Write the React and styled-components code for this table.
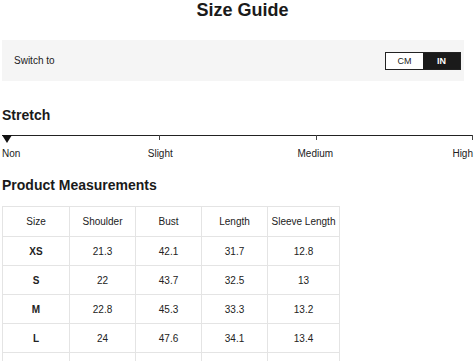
import React from 'react'
import styled, { createGlobalStyle } from 'styled-components'

const Global = createGlobalStyle`
  html, body {
    margin: 0;
    padding: 0;
    background: #fff;
  }
  body {
    font-family: "Liberation Sans", Arial, sans-serif;
    color: #1a1a1a;
  }
`

const Page = styled.div`
  width: 476px;
  height: 361px;
  overflow: hidden;
  padding: 0 3px 0 2px;
  box-sizing: border-box;
`

const Title = styled.h1`
  margin: 0;
  height: 20px;
  line-height: 20px;
  font-size: 18px;
  font-weight: 700;
  text-align: center;
  padding-left: 10px;
`

const SwitchBar = styled.div`
  margin: 20px 9px 0 0;
  height: 41px;
  background: #f5f5f5;
  display: flex;
  align-items: center;
  justify-content: space-between;
  padding: 0 3px 0 12px;
`

const SwitchLabel = styled.span`
  font-size: 10px;
  color: #222;
`

const Toggle = styled.div`
  display: flex;
  border: 1px solid #222;
  height: 16px;
`

const ToggleOption = styled.span`
  width: 37px;
  display: flex;
  align-items: center;
  justify-content: center;
  font-size: 9px;
  font-weight: ${p => (p.$active ? 700 : 400)};
  background: ${p => (p.$active ? '#1a1a1a' : '#fff')};
  color: ${p => (p.$active ? '#fff' : '#222')};
`

const Heading = styled.h2`
  margin: ${p => p.$top}px 0 0;
  height: 16px;
  line-height: 16px;
  font-size: 14px;
  font-weight: 700;
`

const Scale = styled.div`
  margin-top: 12px;
  position: relative;
  height: 1px;
  background: #222;
`

const Tick = styled.span`
  position: absolute;
  top: 0;
  left: ${p => p.$at};
  width: 1px;
  height: 5px;
  background: #444;
`

const Marker = styled.span`
  position: absolute;
  top: 0;
  left: 0;
  width: 0;
  height: 0;
  border-left: 5px solid transparent;
  border-right: 5px solid transparent;
  border-top: 8px solid #111;
`

const ScaleLabels = styled.div`
  margin-top: 12px;
  display: grid;
  grid-template-columns: 1fr 1fr 1fr 1fr;
  font-size: 10px;
  line-height: 12px;
  color: #222;
`

const ScaleLabel = styled.span`
  text-align: ${p => p.$align};
  transform: translateX(${p => p.$shift || 0}px);
`

const Table = styled.table`
  margin-top: 13px;
  border-collapse: collapse;
  width: 337px;
  table-layout: fixed;
  font-size: 10px;
`

const Cell = styled.td`
  border: 1px solid #e4e4e4;
  height: 28px;
  padding: 0;
  text-align: center;
  color: #222;
  font-weight: ${p => (p.$bold ? 700 : 400)};
`

const HeadCell = styled(Cell).attrs({ as: 'th' })`
  font-weight: 400;
  height: 29px;
`

const columns = ['Size', 'Shoulder', 'Bust', 'Length', 'Sleeve Length']
const widths = [67, 66, 66, 66, 72]
const rows = [
  ['XS', '21.3', '42.1', '31.7', '12.8'],
  ['S', '22', '43.7', '32.5', '13'],
  ['M', '22.8', '45.3', '33.3', '13.2'],
  ['L', '24', '47.6', '34.1', '13.4'],
  ['XL', '25.2', '49.9', '34.9', '13.6'],
]

export default function App() {
  return (
    <Page>
      <Global />
      <Title>Size Guide</Title>
      <SwitchBar>
        <SwitchLabel>Switch to</SwitchLabel>
        <Toggle>
          <ToggleOption>CM</ToggleOption>
          <ToggleOption $active>IN</ToggleOption>
        </Toggle>
      </SwitchBar>

      <Heading $top={26}>Stretch</Heading>
      <Scale>
        <Marker />
        <Tick $at="157px" />
        <Tick $at="314px" />
        <Tick $at="calc(100% - 1px)" />
      </Scale>
      <ScaleLabels>
        <ScaleLabel $align="left">Non</ScaleLabel>
        <ScaleLabel $align="left" $shift={28}>Slight</ScaleLabel>
        <ScaleLabel $align="left" $shift={60}>Medium</ScaleLabel>
        <ScaleLabel $align="right">High</ScaleLabel>
      </ScaleLabels>

      <Heading $top={17}>Product Measurements</Heading>
      <Table>
        <colgroup>
          {widths.map((w, i) => (
            <col key={i} style={{ width: w }} />
          ))}
        </colgroup>
        <thead>
          <tr>
            {columns.map(c => (
              <HeadCell key={c}>{c}</HeadCell>
            ))}
          </tr>
        </thead>
        <tbody>
          {rows.map(r => (
            <tr key={r[0]}>
              {r.map((v, i) => (
                <Cell key={i} $bold={i === 0}>{v}</Cell>
              ))}
            </tr>
          ))}
        </tbody>
      </Table>
    </Page>
  )
}
